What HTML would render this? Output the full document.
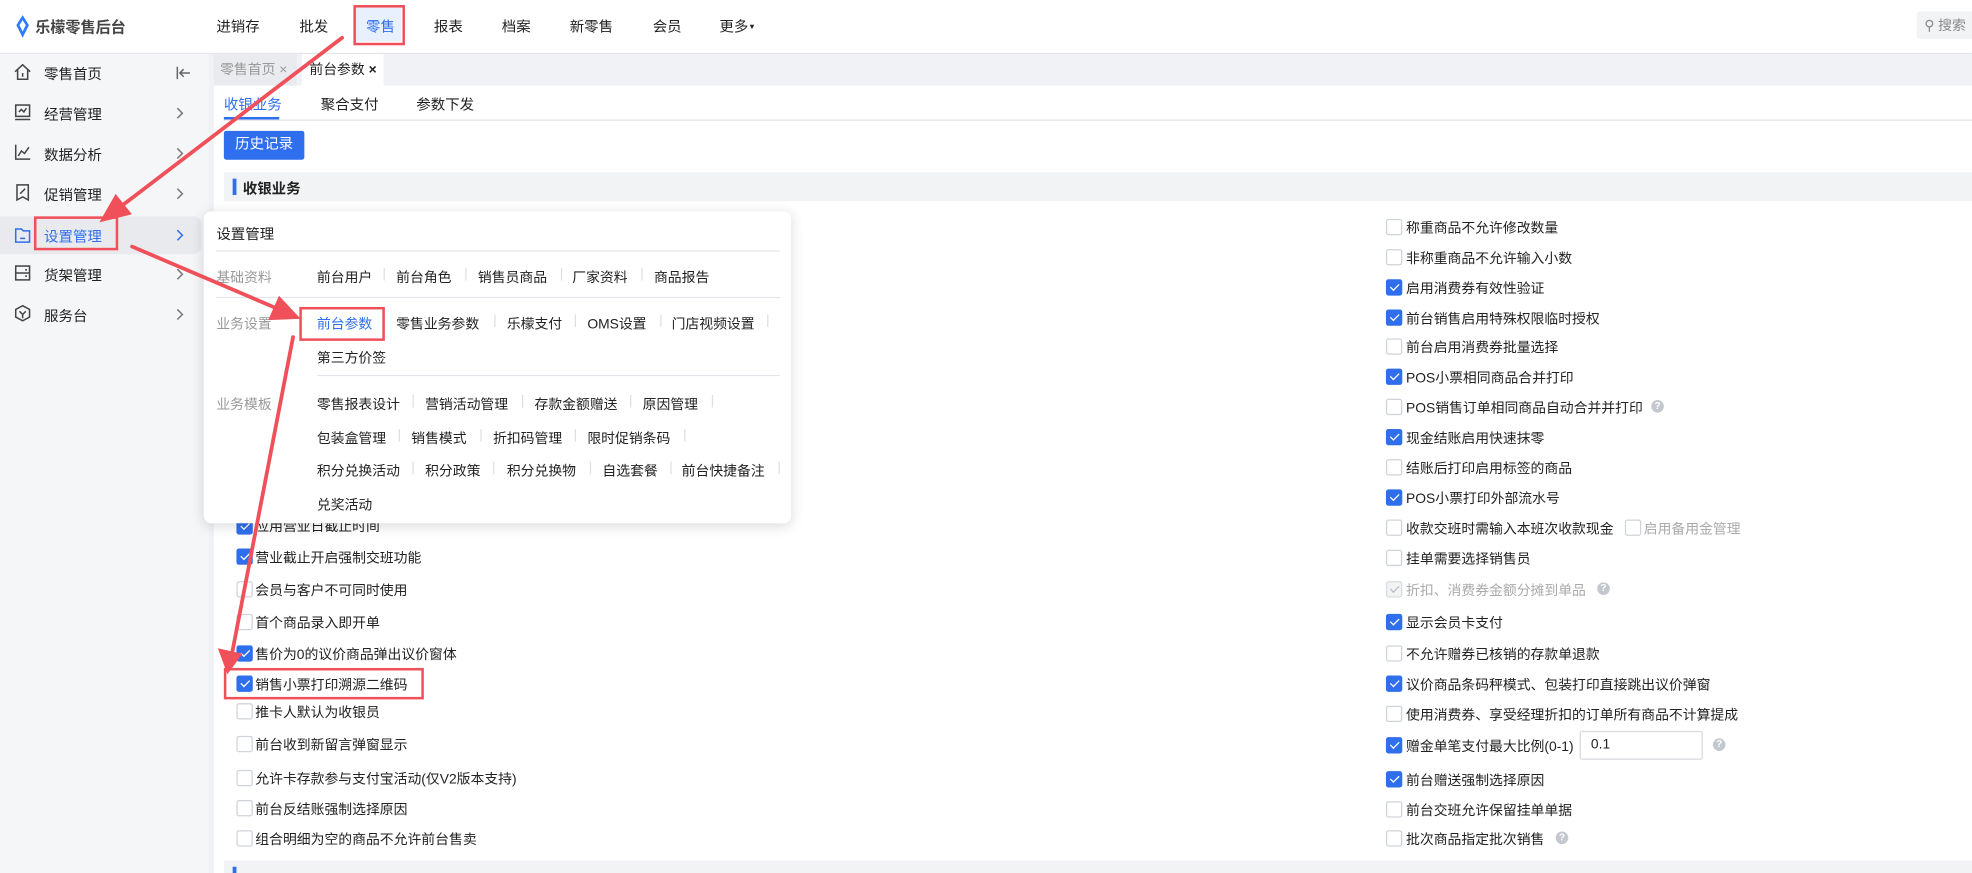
<!DOCTYPE html>
<html><head><meta charset="utf-8">
<style>
html,body{margin:0;padding:0;width:1972px;height:873px;overflow:hidden;background:#fff}
#w{position:absolute;left:0;top:0;width:1568px;height:694px;transform:scale(1.25765,1.25793);transform-origin:0 0;font-family:"Liberation Sans","Noto Sans CJK SC",sans-serif;color:#222;font-size:11px;overflow:hidden;background:#f0f2f5}
.a{position:absolute;white-space:nowrap}
.top{position:absolute;left:0;top:0;width:1568px;height:42px;background:#fff;border-bottom:1px solid #e3e5ea}
.nav{top:13px;font-size:11.5px;color:#222}
.side{position:absolute;left:0;top:43px;width:166px;height:651px;background:#f5f6f8}
.si{position:absolute;left:0;width:166px;height:26px}
.si .t{position:absolute;left:35px;top:6px;font-size:11.5px}
.si svg{position:absolute;left:11px;top:5px}
.si svg.r{left:140px;top:8px}
.panel{position:absolute;left:170px;top:68px;width:1398px;height:626px;background:#fff}
.cb{position:absolute;width:11px;height:11px;border:1px solid #cfd3da;border-radius:2px;background:#fff}
.cb.on{background:#2f6fed;border-color:#2f6fed}
.cb.on:after{content:"";position:absolute;left:3.5px;top:1px;width:3px;height:6px;border:solid #fff;border-width:0 1.6px 1.6px 0;transform:rotate(45deg)}
.cb.dis{background:#f2f3f5;border-color:#d8dbe0}
.cb.dis:after{content:"";position:absolute;left:3.5px;top:1px;width:3px;height:6px;border:solid #b8bcc4;border-width:0 1.4px 1.4px 0;transform:rotate(45deg)}
.lb{font-size:11px;color:#222}
.q{position:absolute;width:10px;height:10px;border-radius:50%;background:#c3c7ce;color:#fff;font-size:8px;line-height:10px;text-align:center;font-weight:bold}
.pop{position:absolute;left:162px;top:168px;width:467px;height:248px;background:#fff;border-radius:6px;box-shadow:0 2px 10px rgba(0,0,0,.15)}
.pi{font-size:11px;color:#222}
.sep{position:absolute;width:1px;height:10px;background:#dcdfe5}
.hl{position:absolute;height:1px;background:#e3e5ea}
.pl{font-size:11px;color:#999}
.red{position:absolute;border:2px solid #f0505a}
</style></head><body><div id="w">
<div class="top">
 <svg class="a" style="left:12px;top:12px" width="12" height="18" viewBox="0 0 12 18"><path d="M6 0 L11 8 L6 18 L1 8 Z" fill="#2f7bff"/><path d="M6 4 L8.5 8 L6 13 L3.5 8Z" fill="#fff"/></svg>
 <div class="a" style="left:28px;top:13px;font-size:12px;font-weight:bold;color:#444">乐檬零售后台</div>
 <div class="a nav" style="left:172px">进销存</div>
 <div class="a nav" style="left:238px">批发</div>
 <div class="a" style="left:283px;top:6px;width:36px;height:27px;background:#e8f0fe"></div>
 <div class="a nav" style="left:291px;color:#2f6fed">零售</div>
 <div class="red" style="left:281px;top:4px;width:37px;height:28px"></div>
 <div class="a nav" style="left:345px">报表</div>
 <div class="a nav" style="left:399px">档案</div>
 <div class="a nav" style="left:453px">新零售</div>
 <div class="a nav" style="left:519px">会员</div>
 <div class="a nav" style="left:572px">更多<span style="font-size:6px;vertical-align:2px">▼</span></div>
 <div class="a" style="left:1524px;top:9px;width:50px;height:22px;background:#f2f3f5;border-radius:3px"></div>
 <div class="a" style="left:1530px;top:12px;font-size:11px;color:#888">⚲ 搜索</div>
</div>
<div class="side">
 <div class="si" style="top:2px"><svg width="14" height="14" viewBox="0 0 14 14" fill="none" stroke="#444" stroke-width="1.2"><path d="M1 7 L7 1.5 L13 7 M3 5.5 V13 H11 V5.5 M7 8 V11"/></svg><span class="t">零售首页</span><svg class="r" width="12" height="10" viewBox="0 0 12 10" fill="none" stroke="#666" stroke-width="1.2"><path d="M1 0 V10 M11 5 H3 M6 2 L3 5 L6 8"/></svg></div>
 <div class="si" style="top:34px"><svg width="14" height="14" viewBox="0 0 14 14" fill="none" stroke="#444" stroke-width="1.2"><rect x="1.5" y="1.5" width="11" height="9"/><path d="M1 13 H13 M4 7 L6 5 L8 7 L10 4"/></svg><span class="t">经营管理</span><svg class="r" width="6" height="10" viewBox="0 0 6 10" fill="none" stroke="#777" stroke-width="1.2"><path d="M1 1 L5 5 L1 9"/></svg></div>
 <div class="si" style="top:66px"><svg width="14" height="14" viewBox="0 0 14 14" fill="none" stroke="#444" stroke-width="1.2"><path d="M1.5 1 V12.5 H13 M3.5 10 L6 6 L8.5 8 L12 3"/></svg><span class="t">数据分析</span><svg class="r" width="6" height="10" viewBox="0 0 6 10" fill="none" stroke="#777" stroke-width="1.2"><path d="M1 1 L5 5 L1 9"/></svg></div>
 <div class="si" style="top:98px"><svg width="14" height="14" viewBox="0 0 14 14" fill="none" stroke="#444" stroke-width="1.2"><path d="M2.5 1 H11.5 V13 L7 10.5 L2.5 13 Z M5 8 L9 4"/></svg><span class="t">促销管理</span><svg class="r" width="6" height="10" viewBox="0 0 6 10" fill="none" stroke="#777" stroke-width="1.2"><path d="M1 1 L5 5 L1 9"/></svg></div>
 <div class="si" style="top:129px;background:#e9eaee;border-radius:0 6px 6px 0;width:160px;height:30px"><svg width="14" height="14" viewBox="0 0 14 14" fill="none" stroke="#2f6fed" stroke-width="1.2" style="top:8px"><path d="M1.5 2 H6 L7.5 3.5 H12.5 V12.5 H1.5 Z M5 9.5 H9"/></svg><span class="t" style="color:#2f6fed;top:8px">设置管理</span><svg class="r" width="6" height="10" viewBox="0 0 6 10" fill="none" stroke="#2f6fed" stroke-width="1.2" style="top:10px"><path d="M1 1 L5 5 L1 9"/></svg></div>
 <div class="si" style="top:162px"><svg width="14" height="14" viewBox="0 0 14 14" fill="none" stroke="#444" stroke-width="1.2"><rect x="1.5" y="1.5" width="11" height="11"/><path d="M1.5 7 H12.5 M9 4.5 H10.5 M9 9.5 H10.5"/></svg><span class="t">货架管理</span><svg class="r" width="6" height="10" viewBox="0 0 6 10" fill="none" stroke="#777" stroke-width="1.2"><path d="M1 1 L5 5 L1 9"/></svg></div>
 <div class="si" style="top:194px"><svg width="14" height="14" viewBox="0 0 14 14" fill="none" stroke="#444" stroke-width="1.2"><path d="M7 1 L12.5 4 V10 L7 13 L1.5 10 V4 Z M4.5 5.5 L7 8 L9.5 5.5 M7 8 V11"/></svg><span class="t">服务台</span><svg class="r" width="6" height="10" viewBox="0 0 6 10" fill="none" stroke="#777" stroke-width="1.2"><path d="M1 1 L5 5 L1 9"/></svg></div>
</div>
<div class="red" style="left:27px;top:172px;width:63px;height:23px"></div>
<div class="a" style="left:170px;top:43px;width:66px;height:25px;background:#e9ebef"></div>
<div class="a" style="left:175px;top:47px;color:#999;font-size:11px">零售首页 ×</div>
<div class="a" style="left:240px;top:43px;width:65px;height:25px;background:#fff"></div>
<div class="a" style="left:246px;top:47px;color:#222;font-size:11px">前台参数 <b>×</b></div>
<div class="panel"></div>
<div class="a" style="left:178px;top:75px;font-size:11.5px;color:#2f6fed">收银业务</div>
<div class="a" style="left:178px;top:93px;width:44px;height:2px;background:#2f6fed"></div>
<div class="a" style="left:255px;top:75px;font-size:11.5px">聚合支付</div>
<div class="a" style="left:331px;top:75px;font-size:11.5px">参数下发</div>
<div class="hl" style="left:178px;top:95px;width:1390px"></div>
<div class="a" style="left:178px;top:104px;width:64px;height:23px;background:#2f6fed;border-radius:2px;color:#fff;font-size:11.5px;line-height:23px;text-align:center">历史记录</div>
<div class="a" style="left:178px;top:137px;width:1390px;height:23px;background:#f2f3f5"></div>
<div class="a" style="left:185px;top:142px;width:3px;height:13px;background:#2f6fed"></div>
<div class="a" style="left:193px;top:142px;font-size:11.5px;font-weight:bold">收银业务</div>
<div class="a" style="left:178px;top:684px;width:1390px;height:12px;background:#f2f3f5"></div>
<div class="a" style="left:185px;top:689px;width:3px;height:8px;background:#2f6fed"></div>

<div class="cb on" style="left:188px;top:412px"></div><div class="a lb" style="left:203px;top:410px">应用营业日截止时间</div>
<div class="cb on" style="left:188px;top:436px"></div><div class="a lb" style="left:203px;top:435px">营业截止开启强制交班功能</div>
<div class="cb" style="left:188px;top:462px"></div><div class="a lb" style="left:203px;top:461px">会员与客户不可同时使用</div>
<div class="cb" style="left:188px;top:488px"></div><div class="a lb" style="left:203px;top:487px">首个商品录入即开单</div>
<div class="cb on" style="left:188px;top:513px"></div><div class="a lb" style="left:203px;top:512px">售价为0的议价商品弹出议价窗体</div>
<div class="cb on" style="left:188px;top:537px"></div><div class="a lb" style="left:203px;top:536px">销售小票打印溯源二维码</div>
<div class="red" style="left:178px;top:531px;width:155px;height:21px"></div>
<div class="cb" style="left:188px;top:559px"></div><div class="a lb" style="left:203px;top:558px">推卡人默认为收银员</div>
<div class="cb" style="left:188px;top:585px"></div><div class="a lb" style="left:203px;top:584px">前台收到新留言弹窗显示</div>
<div class="cb" style="left:188px;top:612px"></div><div class="a lb" style="left:203px;top:611px">允许卡存款参与支付宝活动(仅V2版本支持)</div>
<div class="cb" style="left:188px;top:636px"></div><div class="a lb" style="left:203px;top:635px">前台反结账强制选择原因</div>
<div class="cb" style="left:188px;top:660px"></div><div class="a lb" style="left:203px;top:659px">组合明细为空的商品不允许前台售卖</div>

<div class="cb" style="left:1102px;top:174px"></div><div class="a lb" style="left:1118px;top:173px">称重商品不允许修改数量</div>
<div class="cb" style="left:1102px;top:198px"></div><div class="a lb" style="left:1118px;top:197px">非称重商品不允许输入小数</div>
<div class="cb on" style="left:1102px;top:222px"></div><div class="a lb" style="left:1118px;top:221px">启用消费券有效性验证</div>
<div class="cb on" style="left:1102px;top:246px"></div><div class="a lb" style="left:1118px;top:245px">前台销售启用特殊权限临时授权</div>
<div class="cb" style="left:1102px;top:269px"></div><div class="a lb" style="left:1118px;top:268px">前台启用消费券批量选择</div>
<div class="cb on" style="left:1102px;top:293px"></div><div class="a lb" style="left:1118px;top:292px">POS小票相同商品合并打印</div>
<div class="cb" style="left:1102px;top:317px"></div><div class="a lb" style="left:1118px;top:316px">POS销售订单相同商品自动合并并打印</div><div class="q" style="left:1313px;top:318px">?</div>
<div class="cb on" style="left:1102px;top:341px"></div><div class="a lb" style="left:1118px;top:340px">现金结账启用快速抹零</div>
<div class="cb" style="left:1102px;top:365px"></div><div class="a lb" style="left:1118px;top:364px">结账后打印启用标签的商品</div>
<div class="cb on" style="left:1102px;top:389px"></div><div class="a lb" style="left:1118px;top:388px">POS小票打印外部流水号</div>
<div class="cb" style="left:1102px;top:413px"></div><div class="a lb" style="left:1118px;top:412px">收款交班时需输入本班次收款现金</div>
<div class="cb" style="left:1292px;top:413px"></div><div class="a lb" style="left:1307px;top:412px;color:#aaa">启用备用金管理</div>
<div class="cb" style="left:1102px;top:437px"></div><div class="a lb" style="left:1118px;top:436px">挂单需要选择销售员</div>
<div class="cb dis" style="left:1102px;top:462px"></div><div class="a lb" style="left:1118px;top:461px;color:#aaa">折扣、消费券金额分摊到单品</div><div class="q" style="left:1270px;top:463px">?</div>
<div class="cb on" style="left:1102px;top:488px"></div><div class="a lb" style="left:1118px;top:487px">显示会员卡支付</div>
<div class="cb" style="left:1102px;top:513px"></div><div class="a lb" style="left:1118px;top:512px">不允许赠券已核销的存款单退款</div>
<div class="cb on" style="left:1102px;top:537px"></div><div class="a lb" style="left:1118px;top:536px">议价商品条码秤模式、包装打印直接跳出议价弹窗</div>
<div class="cb" style="left:1102px;top:561px"></div><div class="a lb" style="left:1118px;top:560px">使用消费券、享受经理折扣的订单所有商品不计算提成</div>
<div class="cb on" style="left:1102px;top:586px"></div><div class="a lb" style="left:1118px;top:585px">赠金单笔支付最大比例(0-1)</div>
<div class="a" style="left:1256px;top:581px;width:96px;height:21px;border:1px solid #d6d9de;border-radius:2px;background:#fff"></div><div class="a lb" style="left:1265px;top:586px">0.1</div><div class="q" style="left:1362px;top:587px">?</div>
<div class="cb on" style="left:1102px;top:613px"></div><div class="a lb" style="left:1118px;top:612px">前台赠送强制选择原因</div>
<div class="cb" style="left:1102px;top:637px"></div><div class="a lb" style="left:1118px;top:636px">前台交班允许保留挂单单据</div>
<div class="cb" style="left:1102px;top:660px"></div><div class="a lb" style="left:1118px;top:659px">批次商品指定批次销售</div><div class="q" style="left:1237px;top:661px">?</div>

<div class="pop"></div>
<div class="a pi" style="left:172px;top:178px;font-size:11.5px">设置管理</div>
<div class="hl" style="left:172px;top:199px;width:448px"></div>
<div class="a pl" style="left:172px;top:212px">基础资料</div>
<div class="a pi" style="left:252px;top:212px">前台用户</div><div class="sep" style="left:305px;top:213px"></div>
<div class="a pi" style="left:315px;top:212px">前台角色</div><div class="sep" style="left:370px;top:213px"></div>
<div class="a pi" style="left:380px;top:212px">销售员商品</div><div class="sep" style="left:446px;top:213px"></div>
<div class="a pi" style="left:455px;top:212px">厂家资料</div><div class="sep" style="left:510px;top:213px"></div>
<div class="a pi" style="left:520px;top:212px">商品报告</div>
<div class="hl" style="left:172px;top:236px;width:448px"></div>
<div class="a pl" style="left:172px;top:249px">业务设置</div>
<div class="a pi" style="left:252px;top:249px;color:#2f6fed">前台参数</div>
<div class="red" style="left:238px;top:244px;width:64px;height:23px"></div>
<div class="a pi" style="left:315px;top:249px">零售业务参数</div><div class="sep" style="left:393px;top:250px"></div>
<div class="a pi" style="left:403px;top:249px">乐檬支付</div><div class="sep" style="left:457px;top:250px"></div>
<div class="a pi" style="left:467px;top:249px">OMS设置</div><div class="sep" style="left:525px;top:250px"></div>
<div class="a pi" style="left:534px;top:249px">门店视频设置</div><div class="sep" style="left:610px;top:250px"></div>
<div class="a pi" style="left:252px;top:276px">第三方价签</div>
<div class="hl" style="left:252px;top:298px;width:368px"></div>
<div class="a pl" style="left:172px;top:313px">业务模板</div>
<div class="a pi" style="left:252px;top:313px">零售报表设计</div><div class="sep" style="left:328px;top:314px"></div>
<div class="a pi" style="left:338px;top:313px">营销活动管理</div><div class="sep" style="left:415px;top:314px"></div>
<div class="a pi" style="left:425px;top:313px">存款金额赠送</div><div class="sep" style="left:501px;top:314px"></div>
<div class="a pi" style="left:511px;top:313px">原因管理</div><div class="sep" style="left:566px;top:314px"></div>
<div class="a pi" style="left:252px;top:340px">包装盒管理</div><div class="sep" style="left:317px;top:341px"></div>
<div class="a pi" style="left:327px;top:340px">销售模式</div><div class="sep" style="left:382px;top:341px"></div>
<div class="a pi" style="left:392px;top:340px">折扣码管理</div><div class="sep" style="left:457px;top:341px"></div>
<div class="a pi" style="left:467px;top:340px">限时促销条码</div><div class="sep" style="left:544px;top:341px"></div>
<div class="a pi" style="left:252px;top:366px">积分兑换活动</div><div class="sep" style="left:328px;top:367px"></div>
<div class="a pi" style="left:338px;top:366px">积分政策</div><div class="sep" style="left:392px;top:367px"></div>
<div class="a pi" style="left:403px;top:366px">积分兑换物</div><div class="sep" style="left:469px;top:367px"></div>
<div class="a pi" style="left:479px;top:366px">自选套餐</div><div class="sep" style="left:533px;top:367px"></div>
<div class="a pi" style="left:542px;top:366px">前台快捷备注</div><div class="sep" style="left:619px;top:367px"></div>
<div class="a pi" style="left:252px;top:393px">兑奖活动</div>

<svg class="a" style="left:0;top:0" width="1568" height="694" viewBox="0 0 1568 694">
<g stroke="#f0505a" stroke-width="3" fill="#f0505a" stroke-linecap="round">
<line x1="272" y1="30" x2="95" y2="165"/>
<polygon points="80,176 92,155 104,170" stroke-width="1"/>
<line x1="105" y1="196" x2="222" y2="246"/>
<polygon points="238,253 214,254 222,236" stroke-width="1"/>
<line x1="233" y1="268" x2="184" y2="522"/>
<polygon points="181,535 174,516 192,520" stroke-width="1"/>
</g></svg>
</div></body></html>
